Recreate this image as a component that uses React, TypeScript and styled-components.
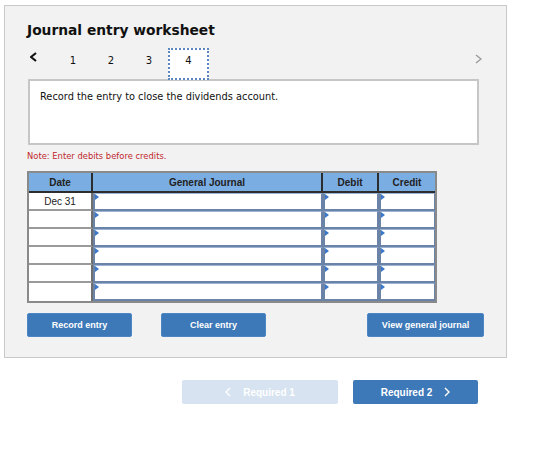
import React from 'react';
import styled, { createGlobalStyle } from 'styled-components';

const GlobalStyle = createGlobalStyle`
  body {
    margin: 0;
    background: #ffffff;
    font-family: "DejaVu Sans", Verdana, sans-serif;
  }
`;

const Page = styled.div`
  width: 560px;
  height: 457px;
  padding: 5px 0 0 4px;
  box-sizing: border-box;
`;

const Panel = styled.section`
  width: 503px;
  height: 353px;
  box-sizing: border-box;
  background: #f2f2f2;
  border: 1px solid #c9c9c9;
  padding: 16px 0 0 22px;
`;

const Title = styled.h2`
  margin: 0;
  font-family: "DejaVu Sans", Verdana, sans-serif;
  font-weight: bold;
  font-size: 13.8px;
  color: #111;
  line-height: 17px;
`;

const TabRow = styled.div`
  display: flex;
  align-items: flex-end;
  height: 32px;
  margin-top: 8px;
  width: 457px;
`;

const ArrowBox = styled.span<{ $w: number }>`
  width: ${p => p.$w}px;
  height: 20px;
  align-self: flex-start;
  display: flex;
  align-items: center;
  padding-left: 3px;
  box-sizing: border-box;
`;

const Tab = styled.span<{ $active?: boolean }>`
  width: ${p => (p.$active ? '41px' : '38px')};
  height: 32px;
  box-sizing: border-box;
  display: flex;
  align-items: center;
  justify-content: center;
  font-size: 10px;
  color: #111;
  padding-bottom: 8px;
  background: ${p => (p.$active ? '#fff' : 'transparent')};
  border: ${p => (p.$active ? '2px dotted #5b86c2' : '2px solid transparent')};
  margin-bottom: -1px;
  position: relative;
  z-index: 1;
`;

const Spacer = styled.div`
  flex: 1;
`;

const Prompt = styled.div`
  width: 451px;
  height: 66px;
  box-sizing: border-box;
  margin-left: 1px;
  background: #fff;
  border: 2px solid #c6c6c6;
  padding: 10px 0 0 10px;
  font-size: 9.8px;
  color: #111;
`;

const Note = styled.div`
  margin-top: 6px;
  font-size: 8.4px;
  color: #c0272d;
`;

const Table = styled.div`
  margin-top: 10px;
  width: 410px;
  box-sizing: border-box;
  border: 2px solid #8a8a8a;
  display: grid;
  grid-template-columns: 64px 230px 56px 56px;
  font-family: "Liberation Sans", Arial, sans-serif;
  font-size: 10px;
  color: #222;
`;

const Head = styled.div<{ $last?: boolean }>`
  height: 20px;
  box-sizing: border-box;
  background: #7aade2;
  border-bottom: 2px solid #2d2d2d;
  border-right: ${p => (p.$last ? 'none' : '2px solid #2d2d2d')};
  display: flex;
  align-items: center;
  justify-content: center;
  font-weight: bold;
  color: #222;
`;

const DateCell = styled.div<{ $last?: boolean }>`
  height: 18px;
  box-sizing: border-box;
  background: #fff;
  border-right: 2px solid #6f6f6f;
  border-bottom: ${p => (p.$last ? 'none' : '2px solid #9a9a9a')};
  display: flex;
  align-items: center;
  justify-content: center;
`;

const InputCell = styled.div<{ $last?: boolean }>`
  height: 18px;
  box-sizing: border-box;
  background: #fff;
  border: 2px solid #6a83a6;
  border-top: 1px solid #9db3d3;
  border-right-width: ${p => (p.$last ? '1px' : '2px')};
  position: relative;
  &::before {
    content: '';
    position: absolute;
    top: 0;
    left: 0;
    border-top: 3px solid transparent;
    border-bottom: 3px solid transparent;
    border-left: 4px solid #3b78c8;
  }
`;

const ButtonRow = styled.div`
  display: flex;
  margin-top: 10px;
  width: 457px;
`;

const Button = styled.button<{ $gap?: number }>`
  height: 24px;
  padding: 0;
  margin-right: ${p => p.$gap ?? 0}px;
  border: 1px solid #4d86c4;
  border-radius: 2px;
  background: #3d78b8;
  color: #fff;
  font-family: "Liberation Sans", Arial, sans-serif;
  font-size: 9px;
  font-weight: bold;
`;

const NavRow = styled.div`
  display: flex;
  gap: 15px;
  margin: 22px 0 0 178px;
`;

const NavButton = styled.button<{ $disabled?: boolean }>`
  height: 24px;
  padding: 0;
  border: none;
  border-radius: 2px;
  background: ${p => (p.$disabled ? '#d7e3f0' : '#3d78b8')};
  color: #fff;
  font-family: "Liberation Sans", Arial, sans-serif;
  font-size: 10px;
  font-weight: bold;
  display: flex;
  align-items: center;
  justify-content: center;
  gap: 12px;
`;

const Chevron = ({
  dir,
  color = '#fff',
  w = 6,
  h = 10,
  sw = 1.4,
}: {
  dir: 'left' | 'right';
  color?: string;
  w?: number;
  h?: number;
  sw?: number;
}) => (
  <svg width={w} height={h} viewBox={`0 0 ${w} ${h}`}>
    <path
      d={
        dir === 'left'
          ? `M${w - 1} 1 L1 ${h / 2} L${w - 1} ${h - 1}`
          : `M1 1 L${w - 1} ${h / 2} L1 ${h - 1}`
      }
      fill="none"
      stroke={color}
      strokeWidth={sw}
    />
  </svg>
);

const rows = ['Dec 31', '', '', '', '', ''];

export default function App() {
  return (
    <Page>
      <GlobalStyle />
      <Panel>
        <Title>Journal entry worksheet</Title>
        <TabRow>
          <ArrowBox $w={27}>
            <Chevron dir="left" color="#111" w={7} h={10} sw={2.2} />
          </ArrowBox>
          <Tab>1</Tab>
          <Tab>2</Tab>
          <Tab>3</Tab>
          <Tab $active>4</Tab>
          <Spacer />
          <ArrowBox $w={12} style={{ paddingTop: 4 }}>
            <Chevron dir="right" color="#9a9a9a" w={7} h={10} sw={1.4} />
          </ArrowBox>
        </TabRow>
        <Prompt>Record the entry to close the dividends account.</Prompt>
        <Note>Note: Enter debits before credits.</Note>
        <Table>
          <Head>Date</Head>
          <Head>General Journal</Head>
          <Head>Debit</Head>
          <Head $last>Credit</Head>
          {rows.map((d, i) => (
            <React.Fragment key={i}>
              <DateCell $last={i === rows.length - 1}>{d}</DateCell>
              <InputCell />
              <InputCell />
              <InputCell $last />
            </React.Fragment>
          ))}
        </Table>
        <ButtonRow>
          <Button style={{ width: 105 }} $gap={29}>Record entry</Button>
          <Button style={{ width: 105 }}>Clear entry</Button>
          <Spacer />
          <Button style={{ width: 117 }}>View general journal</Button>
        </ButtonRow>
      </Panel>
      <NavRow>
        <NavButton $disabled style={{ width: 156 }}>
          <Chevron dir="left" />
          Required 1
        </NavButton>
        <NavButton style={{ width: 125 }}>
          Required 2
          <Chevron dir="right" />
        </NavButton>
      </NavRow>
    </Page>
  );
}
